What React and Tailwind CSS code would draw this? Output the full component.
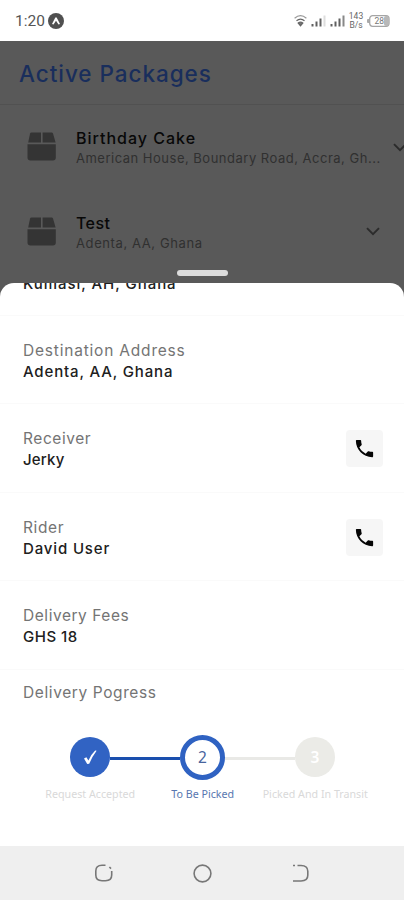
const uiFont = "font-['Inter','Liberation_Sans',sans-serif]";

function BoxIcon() {
  return (
    <svg width="30" height="30" viewBox="0 0 30 30" fill="#343434" className="shrink-0">
      <path d="M4.5 0.5 H14 V10.5 H1.2 L3 1.7 Q3.3 0.5 4.5 0.5 Z" />
      <path d="M15.6 0.5 H24.5 Q25.8 0.5 26.1 1.7 L28.6 10.5 H15.6 Z" />
      <path d="M0.5 12.3 H28.8 V25.5 Q28.8 28.5 25.8 28.5 H3.5 Q0.5 28.5 0.5 25.5 Z" />
    </svg>
  );
}

function Chevron() {
  return (
    <svg width="14" height="9" viewBox="0 0 14 9" fill="none" stroke="#2b2b2b" strokeWidth="1.9" className="shrink-0">
      <path d="M1 1.2 L7 7.2 L13 1.2" />
    </svg>
  );
}

function PhoneButton() {
  return (
    <div className="mt-[2px] flex h-[37px] w-[37px] items-center justify-center rounded-[4px] bg-[#f6f6f6]">
      <svg width="23" height="23" viewBox="0 0 24 24" fill="#050505">
        <path d="M6.62 10.79c1.44 2.83 3.76 5.14 6.59 6.59l2.2-2.2c.27-.27.67-.36 1.02-.24 1.12.37 2.33.57 3.57.57.55 0 1 .45 1 1V20c0 .55-.45 1-1 1-9.39 0-17-7.61-17-17 0-.55.45-1 1-1h3.5c.55 0 1 .45 1 1 0 1.25.2 2.45.57 3.57.11.35.03.74-.25 1.02l-2.2 2.2z" />
      </svg>
    </div>
  );
}

function Signal({ last }) {
  return (
    <svg width="16" height="13" viewBox="0 0 16 13" fill="#606060">
      <rect x="0.5" y="10" width="2" height="2.5" />
      <rect x="4.5" y="7.5" width="2" height="5" />
      <rect x="8.5" y="4.5" width="2" height="8" />
      <rect x="12.5" y="1.5" width="2" height="11" fill={last} />
    </svg>
  );
}

function StatusBar() {
  return (
    <div className="flex h-[41px] shrink-0 items-center justify-between bg-white pr-[14px] pl-[15px]">
      <div className="flex items-center gap-[3px]">
        <span className="w-[30px] font-['Roboto',sans-serif] text-[15.5px] leading-5 text-[#555]">1:20</span>
        <svg width="16" height="16" viewBox="0 0 16 16">
          <circle cx="8" cy="8" r="8" fill="#505050" />
          <path d="M4 11 L7.2 4.7 Q8 3.6 8.8 4.7 L12 11 L10.5 11.5 L8 7.8 L5.5 11.5 Z" fill="#fff" />
        </svg>
      </div>
      <div className="flex items-center">
        <svg width="13" height="13" viewBox="0 0 13 13" fill="none" stroke="#666" strokeWidth="1.2">
          <path d="M0.6 4.2 Q6.5 -0.8 12.4 4.2" stroke="#999" />
          <path d="M2.5 6.8 Q6.5 3.4 10.5 6.8" />
          <path d="M4.2 9 Q6.5 7.3 8.8 9 L6.5 11.7 Z" fill="#777" />
        </svg>
        <div className="ml-1 flex gap-[3px]">
          <Signal last="#dedede" />
          <Signal last="#888" />
        </div>
        <div className="ml-[2px] w-[16px] text-center font-['Roboto',sans-serif] text-[8.5px] leading-[9px] text-[#666]">
          <div>143</div>
          <div>B/s</div>
        </div>
        <svg width="23" height="12" viewBox="0 0 23 12" className="ml-[3px]">
          <rect x="0" y="4" width="3" height="4" rx="1" fill="#aaa" />
          <rect x="2.7" y="0.7" width="19.3" height="10.6" rx="3" fill="#fff" stroke="#a5a5a5" strokeWidth="1.3" />
          <rect x="17" y="1" width="5" height="10" rx="2" fill="#b8b8b8" />
          <text x="7.5" y="9" fontSize="8.5" fill="#777" fontFamily="Roboto, sans-serif">28</text>
        </svg>
      </div>
    </div>
  );
}

function PackageRow({ name, address, nameTracking, addressTracking, width }) {
  return (
    <div className="flex h-[84.5px] shrink-0 items-center pl-[27px]">
      <BoxIcon />
      <div className={`ml-[19px] shrink-0 pt-[2px] ${width}`}>
        <div className={`text-[16px] leading-[20px] font-medium whitespace-nowrap text-[#080808] ${nameTracking}`}>{name}</div>
        <div className={`text-[13px] leading-[20px] whitespace-nowrap text-[#303030] ${addressTracking}`}>{address}</div>
      </div>
      <Chevron />
    </div>
  );
}

function DetailRow({ label, value, labelTracking, valueTracking, phone }) {
  return (
    <div className="flex h-[88.5px] shrink-0 items-center justify-between border-b border-[#fafafa] pr-[21px] pl-[23px]">
      <div className="pt-[3px] leading-[21px] whitespace-nowrap">
        <div className={`text-[15.5px] text-[#747474] ${labelTracking}`}>{label}</div>
        <div className={`text-[15px] font-medium text-[#202020] ${valueTracking}`}>{value}</div>
      </div>
      {phone && <PhoneButton />}
    </div>
  );
}

function Progress() {
  return (
    <div className="font-['Noto_Sans',sans-serif]">
      <div className="flex h-[45px] items-center pl-[70px]">
        <div className="flex h-10 w-10 items-center justify-center rounded-full bg-[#3163c3]">
          <svg width="16" height="18" viewBox="0 0 16 18" fill="#fff">
            <path d="M2 10.6 L4.4 9.2 L6.4 12.4 Q9.2 6.4 13.2 2.6 L14.6 2.8 Q10.2 8.6 7.2 15.8 L5.2 16 Z" />
          </svg>
        </div>
        <div className="mt-[2px] h-[3px] w-[70px] bg-[#1a4fae]" />
        <div className="flex h-[45px] w-[45px] items-center justify-center rounded-full border-[5px] border-[#2f62c2] bg-white pt-[2px] text-[15.5px] text-[#47649d]">
          2
        </div>
        <div className="mt-[2px] h-[3px] w-[70px] bg-[#e9e9e6]" />
        <div className="flex h-10 w-10 items-center justify-center rounded-full bg-[#ebebe7] pt-[2px] text-[15.5px] font-semibold text-white">
          3
        </div>
      </div>
      <div className="mt-[6px] flex pl-[34px] text-center text-[10.7px] leading-[16px] whitespace-nowrap">
        <div className="w-[112.5px] text-[#d9d9d9]">Request Accepted</div>
        <div className="w-[112.5px] text-[#5877b0]">To Be Picked</div>
        <div className="w-[112.5px] text-[#d9d9d9]">Picked And In Transit</div>
      </div>
    </div>
  );
}

function NavBar() {
  return (
    <div className="flex h-[54px] shrink-0 items-center justify-between bg-[#efefef] px-[93px]">
      <svg width="21" height="20" viewBox="0 0 21 20" fill="none" stroke="#777" strokeWidth="1.6">
        <path d="M12.5 2.3 H9 Q2.8 2.3 2.8 8 V12 Q2.8 17.7 9 17.7 H12.5 Q18.7 17.7 18.7 12 V8" />
        <path d="M16.4 4 L18 5.6" />
      </svg>
      <svg width="20" height="20" viewBox="0 0 20 20" fill="none" stroke="#777" strokeWidth="1.6">
        <circle cx="9.5" cy="10.5" r="8.4" />
      </svg>
      <svg width="20" height="20" viewBox="0 0 20 20" fill="none" stroke="#777" strokeWidth="1.6">
        <path d="M6.5 2.5 H10 Q16.8 2.5 16.8 8.3 V12.3 Q16.8 18 10 18 H2" />
        <path d="M2 2.5 H4" />
      </svg>
    </div>
  );
}

export default function App() {
  return (
    <div className={`flex h-[900px] w-[404px] flex-col overflow-hidden bg-[#595959] ${uiFont}`}>
      <StatusBar />
      <div className="flex h-[242px] shrink-0 flex-col">
        <div className="flex h-[64px] shrink-0 items-center border-b border-[#515151] pl-[19px]">
          <h1 className="pt-[2px] text-[22.5px] font-medium tracking-[0.95px] whitespace-nowrap text-[#192e5c]">Active Packages</h1>
        </div>
        <PackageRow
          name="Birthday Cake"
          address="American House, Boundary Road, Accra, Gh..."
          nameTracking="tracking-[1px]"
          addressTracking="tracking-[0.5px]"
          width="w-[317px]"
        />
        <div className="flex h-[80px] shrink-0 flex-col">
          <PackageRow
            name="Test"
            address="Adenta, AA, Ghana"
            nameTracking="tracking-[0.4px]"
            addressTracking="tracking-[0.6px]"
            width="w-[290px]"
          />
        </div>
        <div className="mx-auto h-[6px] w-[51px] shrink-0 rounded-full bg-[#dcdcdc]" />
      </div>
      <div className="flex min-h-0 flex-1 flex-col overflow-hidden rounded-t-[14px] bg-white">
        <div className="flex h-[32.5px] shrink-0 items-start overflow-hidden border-b border-[#fafafa] pl-[23px]">
          <div className="-mt-[10px] text-[15px] leading-[21px] font-medium tracking-[0.95px] whitespace-nowrap text-[#202020]">Kumasi, AH, Ghana</div>
        </div>
        <DetailRow label="Destination Address" value="Adenta, AA, Ghana" labelTracking="tracking-[0.8px]" valueTracking="tracking-[0.85px]" />
        <DetailRow label="Receiver" value="Jerky" labelTracking="tracking-[0.55px]" valueTracking="tracking-[0.2px]" phone />
        <DetailRow label="Rider" value="David User" labelTracking="tracking-[0.6px]" valueTracking="tracking-[0.85px]" phone />
        <DetailRow label="Delivery Fees" value="GHS 18" labelTracking="tracking-[0.55px]" valueTracking="tracking-[0.5px]" />
        <div className="mt-[12px] mb-[32px] pl-[23px] text-[15.5px] leading-[21px] tracking-[0.6px] text-[#747474]">Delivery Pogress</div>
        <Progress />
      </div>
      <NavBar />
    </div>
  );
}
